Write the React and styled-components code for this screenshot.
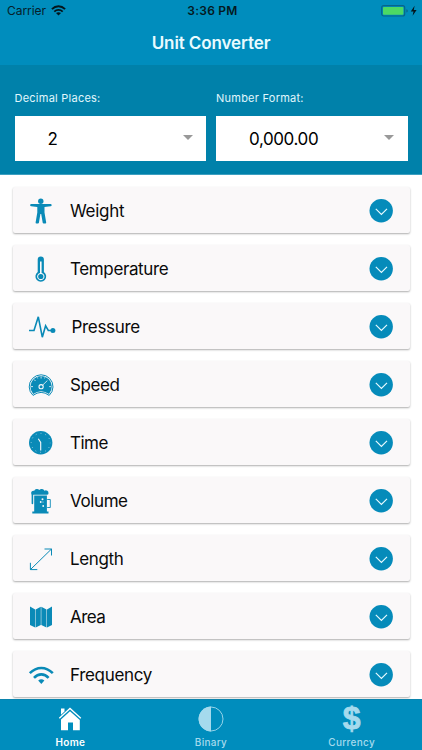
import React, { useState } from 'react';
import styled, { createGlobalStyle } from 'styled-components';

const GlobalStyle = createGlobalStyle`
    * {
        box-sizing: border-box;
    }
    body {
        margin: 0;
        background: #fff;
        font-family: Inter, 'Liberation Sans', sans-serif;
    }
    button {
        font: inherit;
        border: 0;
        padding: 0;
        background: none;
    }
    svg {
        display: block;
        flex-shrink: 0;
    }
`;

const Screen = styled.div`
    display: flex;
    flex-direction: column;
    height: 750px;
    overflow: hidden;
    background: #fff;
`;

const StatusBar = styled.div`
    display: grid;
    grid-template-columns: 1fr auto 1fr;
    align-items: center;
    height: 22px;
    padding: 0 4px 1px 7px;
    background: #008dbd;
    color: #06202a;
    font-size: 12px;
    line-height: 14px;
`;

const Carrier = styled.div`
    display: flex;
    align-items: center;
    gap: 5px;
    letter-spacing: -0.05px;
`;

const Clock = styled.div`
    font-weight: 600;
    color: #051a22;
    letter-spacing: 0.25px;
`;

const Power = styled.div`
    display: flex;
    justify-content: flex-end;
`;

const Header = styled.h1`
    margin: 0;
    height: 43px;
    background: #008dbd;
    color: #e9fbff;
    font-size: 17px;
    font-weight: 600;
    line-height: 42px;
    text-align: center;
    letter-spacing: -0.1px;
`;

const Settings = styled.div`
    display: grid;
    grid-template-columns: 1fr 1fr;
    gap: 10px;
    height: 110px;
    padding: 25px 14.5px 0;
    background: #0081aa;
    border-bottom: 1px solid #3d9fc0;
    flex-shrink: 0;
`;

const FieldLabel = styled.div`
    height: 26px;
    color: #e0f7fd;
    font-size: 11px;
    line-height: 16px;
    letter-spacing: 0.24px;
`;

const SelectBox = styled.div`
    display: flex;
    align-items: center;
    justify-content: space-between;
    height: 45px;
    padding: 0 13.5px 0 33px;
    background: #fff;
    color: #000;
    font-size: 17px;
    letter-spacing: ${(props) => props.$spacing || 0}px;
`;

const Caret = styled.span`
    border: 5px solid transparent;
    border-top-color: #999;
    border-bottom: 0;
    margin-bottom: 3px;
`;

const List = styled.div`
    display: flex;
    flex-direction: column;
    gap: 12px;
    flex: 1;
    min-height: 0;
    overflow: hidden;
    padding: 12px 12.5px 0;
`;

const Card = styled.div`
    display: flex;
    align-items: center;
    height: 46px;
    flex-shrink: 0;
    padding: 1px 16.5px 0 15.5px;
    background: #faf8f9;
    border-radius: 2px;
    box-shadow: 0 1px 2px rgba(0, 0, 0, 0.32);
`;

const CardTitle = styled.div`
    flex: 1;
    margin-left: ${(props) => (props.$wide ? 17.5 : 16)}px;
    padding-top: 1px;
    color: #0a0a0a;
    font-size: 17px;
    line-height: 24px;
    letter-spacing: ${(props) => props.$spacing}px;
`;

const TabBar = styled.div`
    display: grid;
    grid-template-columns: repeat(3, 1fr);
    height: 51px;
    flex-shrink: 0;
    background: #008dbd;
    border-top: 1px solid #0b84ad;
`;

const Tab = styled.button`
    display: flex;
    flex-direction: column;
    align-items: center;
    padding-top: 5px;
    color: ${(props) => (props.$active ? '#fff' : '#a5daed')};
    font-size: 10px;
    font-weight: ${(props) => (props.$active ? 600 : 500)};
    line-height: 14px;
    letter-spacing: 0.3px;

    svg {
        margin-bottom: 2px;
    }
`;

const Dollar = styled.span`
    height: 28px;
    margin-bottom: 2px;
    font-family: 'Liberation Sans', sans-serif;
    font-size: 32px;
    font-weight: 700;
    line-height: 26px;
    letter-spacing: 0;
    -webkit-text-stroke: 0.8px currentColor;
`;

const BLUE = '#0a8ab7';
const PAPER = '#faf8f9';

function Icon({ children }) {
    return (
        <svg width="26" height="26" viewBox="0 0 26 26" fill={BLUE} overflow="visible">
            {children}
        </svg>
    );
}

const WeightIcon = () => (
    <Icon>
        <circle cx="12.8" cy="3.2" r="2.7" />
        <path d="M3.2 6.1H22.6a1 1 0 0 1 0 2.1L16.5 9v5.6L18.2 24.5a.9.9 0 0 1-.9 1h-1.6a1 1 0 0 1-1-.8L13.2 16h-.8l-1.5 8.7a1 1 0 0 1-1 .8H8.5a.9.9 0 0 1-.9-1L9.3 14.6V9l-6.1-.8a1 1 0 0 1 0-2.1Z" />
    </Icon>
);

const TemperatureIcon = () => (
    <Icon>
        <path d="M9.7 3.5a3.1 3.1 0 0 1 6.2 0V16a5.4 5.4 0 1 1-6.2 0Z" />
        <path d="M12 5.5h1.6v11.4a3.7 3.7 0 1 1-1.6 0Z" fill={PAPER} />
        <circle cx="12.8" cy="20.5" r="2.6" />
    </Icon>
);

const PressureIcon = () => (
    <Icon>
        <path
            d="M1 16.5H6L10.3 2.8 14.3 23.2 17.6 11.8 20.3 16.5H24"
            fill="none"
            stroke={BLUE}
            strokeWidth="1.6"
        />
        <circle cx="24.9" cy="16.5" r="2.5" />
    </Icon>
);

const SpeedIcon = () => (
    <Icon>
        <path
            d="M5 23.4A11.9 11.9 0 1 1 21.2 23.4Q13.1 17.4 5 23.4Z"
            fill={PAPER}
            stroke={BLUE}
            strokeWidth="1"
        />
        <path d="M5.2 21.9A10.7 10.7 0 1 1 21 21.9Q13.1 16.6 5.2 21.9Z" />
        <path
            d="M13.1 4.3V6.5M6.1 7.5L7.5 9M3 14.6H5M23.2 14.6H21.2M9.2 5.3L9.7 6.4M17 5.3L16.5 6.4M14.7 13.1L19.4 8.5"
            stroke={PAPER}
            strokeWidth=".8"
            fill="none"
        />
        <circle cx="13.1" cy="14.7" r="2.1" fill="none" stroke={PAPER} strokeWidth="1.1" />
    </Icon>
);

const TimeIcon = () => (
    <Icon>
        <circle cx="12.7" cy="12.8" r="11.7" />
        <circle
            cx="12.7"
            cy="12.8"
            r="9.5"
            fill="none"
            stroke="#b4dcea"
            strokeWidth=".9"
            strokeDasharray=".9 4.074"
            strokeDashoffset=".45"
        />
        <path d="M10.3 8.8L12.7 12.5V20.5" fill="none" stroke={PAPER} strokeWidth="1.1" />
    </Icon>
);

const VolumeIcon = () => (
    <Icon>
        <path d="M3.2 5.5a2.3 2.3 0 0 1 3-2.7A3.1 3.1 0 0 1 11.3 2a3.3 3.3 0 0 1 5.2.7 2.7 2.7 0 0 1 4 2.7q0 1.4-1.7 1.4H5.2V15.5a.8.8 0 0 1-1.6 0V7Z" />
        <path d="M6.2 7.4H18.9V24H6.2ZM4.3 23.6H20.5V25.5H4.3Z" />
        <path d="M19.2 11.5H22.3V19.5H19.2" fill="none" stroke={BLUE} strokeWidth=".9" />
        <g fill={PAPER}>
            <circle cx="14.5" cy="11.2" r="1" />
            <circle cx="12.7" cy="14" r=".9" />
            <circle cx="15.2" cy="18" r=".9" />
            <circle cx="15" cy="14" r=".5" />
        </g>
    </Icon>
);

const LengthIcon = () => (
    <Icon>
        <path
            d="M2.4 23.6L23.5 3M16.5 3H23.5V9.5M2.4 16.8V23.6H9.3"
            fill="none"
            stroke={BLUE}
            strokeWidth="1"
        />
    </Icon>
);

const AreaIcon = () => (
    <Icon>
        <path d="M2 2.5L7.2 5.6V23.6L2 21ZM7.7 5.6L12.8 2.8V21L7.7 23.6ZM13.3 2.8L18.5 5.6V23.6L13.3 21ZM19 5.6L24 2.5V21L19 23.6Z" />
    </Icon>
);

const FrequencyIcon = () => (
    <Icon>
        <g fill="none" stroke={BLUE} strokeWidth="2.6">
            <path d="M1.8 11.2Q7 6 13.3 6T24.8 11.2" />
            <path d="M6 15.8Q9.2 12.4 13.3 12.4T20.6 15.8" />
        </g>
        <path d="M10.2 18.5Q13.3 16 16.4 18.5L13.3 22Z" />
    </Icon>
);

const Chevron = () => (
    <svg width="24" height="24" viewBox="0 0 24 24">
        <circle cx="12.2" cy="11.8" r="11.7" fill="#058bba" />
        <path d="M6.8 9.8L12.4 15.4 18 9.8" fill="none" stroke="#e6faff" strokeWidth="1.2" />
    </svg>
);

const WifiStatus = () => (
    <svg width="15" height="11" viewBox="0 0 15 11">
        <g fill="none" stroke="#04161d" strokeWidth="1.9">
            <path d="M.9 4.1Q3.8 1.3 7.5 1.3T14.1 4.1" />
            <path d="M3.3 6.6Q5.1 4.9 7.5 4.9T11.7 6.6" />
        </g>
        <path d="M5 8Q7.5 6.5 10 8L7.5 10.6Z" fill="#04161d" />
    </svg>
);

const Battery = () => (
    <svg width="37" height="12" viewBox="0 0 37 12">
        <rect x=".7" y=".7" width="23" height="10.3" rx="2" fill="none" stroke="#07658a" strokeWidth="1.2" />
        <rect x="2" y="2" width="20.4" height="7.8" rx=".8" fill="#4cd964" />
        <path d="M25.4 4.2q1.4.3 1.4 1.7t-1.4 1.7Z" fill="#07658a" />
        <path d="M33.6.8L29.8 6.5H32.5L31.6 10.8 35.6 5H32.8Z" fill="#04161d" />
    </svg>
);

const HomeIcon = () => (
    <svg width="28" height="28" viewBox="0 0 28 28" fill="#fff">
        <path d="M5 3.5H8.5V6.5L5 9.8Z" />
        <path d="M14 6.3L23.8 15V25.3H17V17.5H12V25.3H5V14.5Z" />
        <path d="M3.3 13.2L14 3.4 24.8 13.2" fill="none" stroke="#fff" strokeWidth="1.3" />
    </svg>
);

const BinaryIcon = () => (
    <svg width="28" height="28" viewBox="0 0 28 28">
        <circle cx="14" cy="14" r="12" fill="none" stroke="#a5daed" strokeWidth=".9" />
        <path d="M14 1.6A12.4 12.4 0 0 0 14 26.4Z" fill="#a5daed" />
    </svg>
);

const units = [
    { name: 'Weight', icon: WeightIcon, spacing: -0.3 },
    { name: 'Temperature', icon: TemperatureIcon, spacing: -0.37 },
    { name: 'Pressure', icon: PressureIcon, spacing: -0.32, wide: true },
    { name: 'Speed', icon: SpeedIcon, spacing: -0.38 },
    { name: 'Time', icon: TimeIcon, spacing: -0.5 },
    { name: 'Volume', icon: VolumeIcon, spacing: -0.4 },
    { name: 'Length', icon: LengthIcon, spacing: -0.35 },
    { name: 'Area', icon: AreaIcon, spacing: -0.55 },
    { name: 'Frequency', icon: FrequencyIcon, spacing: -0.32 },
];

function App() {
    const [tab, setTab] = useState('home');

    return (
        <Screen>
            <GlobalStyle />
            <StatusBar>
                <Carrier>
                    Carrier
                    <WifiStatus />
                </Carrier>
                <Clock>3:36 PM</Clock>
                <Power>
                    <Battery />
                </Power>
            </StatusBar>
            <Header>Unit Converter</Header>
            <Settings>
                <div>
                    <FieldLabel>Decimal Places:</FieldLabel>
                    <SelectBox>
                        2
                        <Caret />
                    </SelectBox>
                </div>
                <div>
                    <FieldLabel>Number Format:</FieldLabel>
                    <SelectBox $spacing={-0.4}>
                        0,000.00
                        <Caret />
                    </SelectBox>
                </div>
            </Settings>
            <List>
                {units.map(({ name, icon: UnitIcon, spacing, wide }) => (
                    <Card key={name}>
                        <UnitIcon />
                        <CardTitle $spacing={spacing} $wide={wide}>
                            {name}
                        </CardTitle>
                        <Chevron />
                    </Card>
                ))}
            </List>
            <TabBar>
                <Tab $active={tab === 'home'} onClick={() => setTab('home')}>
                    <HomeIcon />
                    Home
                </Tab>
                <Tab $active={tab === 'binary'} onClick={() => setTab('binary')}>
                    <BinaryIcon />
                    Binary
                </Tab>
                <Tab $active={tab === 'currency'} onClick={() => setTab('currency')}>
                    <Dollar>$</Dollar>
                    Currency
                </Tab>
            </TabBar>
        </Screen>
    );
}

export default App;
